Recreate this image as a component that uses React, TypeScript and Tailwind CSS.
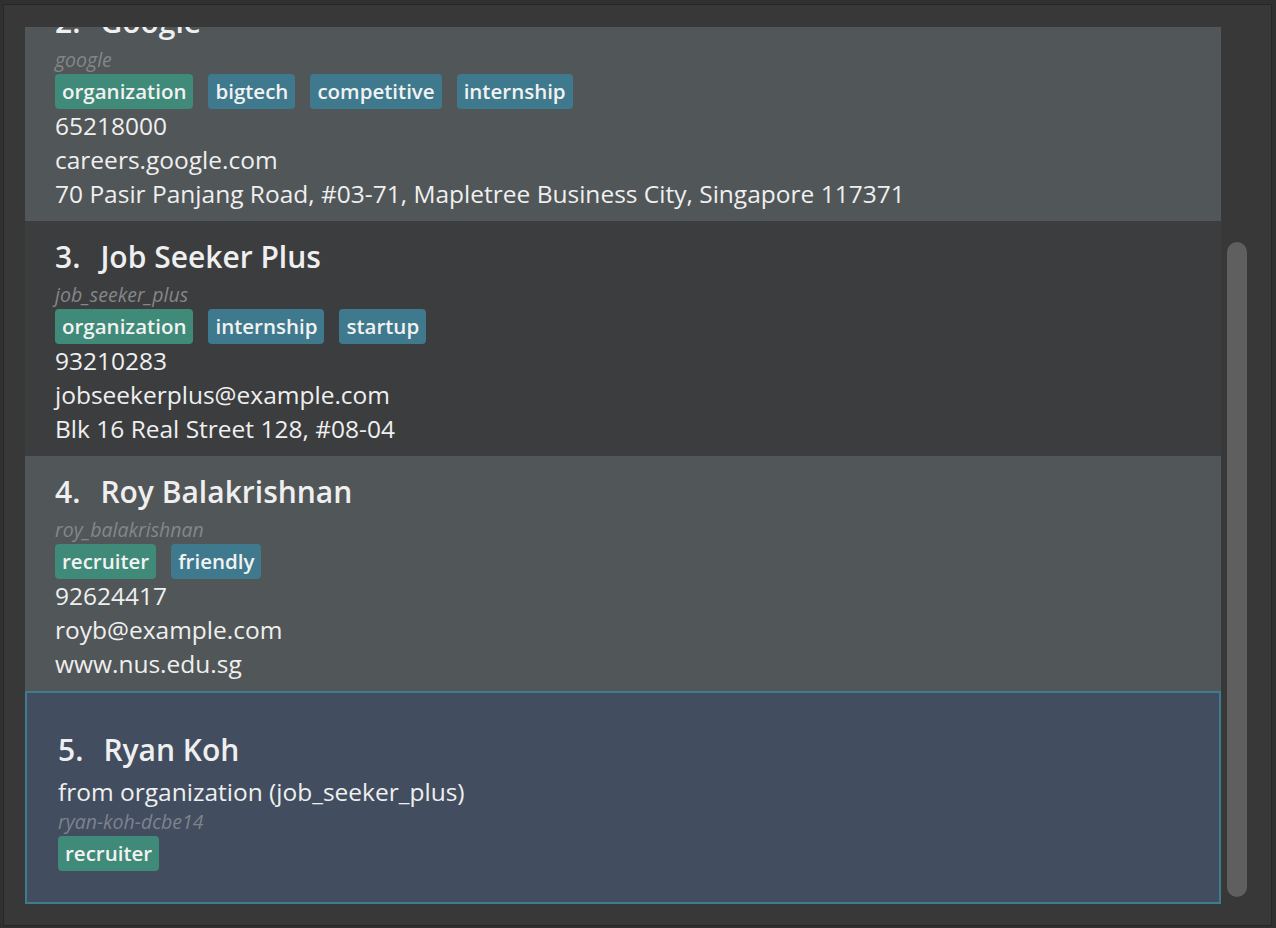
import React from 'react';

type TagKind = 'role' | 'topic';

interface Contact {
  index: number;
  name: string;
  handle: string;
  tags: { label: string; kind: TagKind }[];
  lines: string[];
  from?: string;
  selected?: boolean;
  shade: 'light' | 'dark';
}

const contacts: Contact[] = [
  {
    index: 2,
    name: 'Google',
    handle: 'google',
    tags: [
      { label: 'organization', kind: 'role' },
      { label: 'bigtech', kind: 'topic' },
      { label: 'competitive', kind: 'topic' },
      { label: 'internship', kind: 'topic' }
    ],
    lines: ['65218000', 'careers.google.com', '70 Pasir Panjang Road, #03-71, Mapletree Business City, Singapore 117371'],
    shade: 'light'
  },
  {
    index: 3,
    name: 'Job Seeker Plus',
    handle: 'job_seeker_plus',
    tags: [
      { label: 'organization', kind: 'role' },
      { label: 'internship', kind: 'topic' },
      { label: 'startup', kind: 'topic' }
    ],
    lines: ['93210283', 'jobseekerplus@example.com', 'Blk 16 Real Street 128, #08-04'],
    shade: 'dark'
  },
  {
    index: 4,
    name: 'Roy Balakrishnan',
    handle: 'roy_balakrishnan',
    tags: [
      { label: 'recruiter', kind: 'role' },
      { label: 'friendly', kind: 'topic' }
    ],
    lines: ['92624417', 'royb@example.com', 'www.nus.edu.sg'],
    shade: 'light'
  },
  {
    index: 5,
    name: 'Ryan Koh',
    handle: 'ryan-koh-dcbe14',
    from: 'from organization (job_seeker_plus)',
    tags: [{ label: 'recruiter', kind: 'role' }],
    lines: [],
    shade: 'dark',
    selected: true
  }
];

function TagChip({ label, kind }: { label: string; kind: TagKind }) {
  return (
    <span
      className={
        kind === 'role'
          ? 'h-[35px] px-[7px] rounded-[4px] text-[20.5px] leading-[35px] font-semibold text-[#f2f2f2] bg-[#3f8a78]'
          : 'h-[35px] px-[7px] rounded-[4px] text-[20.5px] leading-[35px] font-semibold text-[#f2f2f2] bg-[#3e798d]'
      }
    >
      {label}
    </span>
  );
}

function ContactCard({ contact }: { contact: Contact }) {
  if (contact.selected) {
    return (
      <div className="h-[213px] shrink-0 border-2 border-[#3e7b91] bg-[#424d5f] pl-[31px] pt-[37px]">
        <div className="flex h-[40px] items-center text-[30px] leading-[40px] font-semibold text-[#efefef]">
          <span>{contact.index}.</span>
          <span className="ml-[20px]">{contact.name}</span>
        </div>
        <div className="mt-[5px] text-[24.5px] leading-[34px] text-[#efefef]">{contact.from}</div>
        <div className="text-[19.5px] leading-[26px] italic text-[#7d838c]">{contact.handle}</div>
        <div className="mt-[1px] flex gap-[15px]">
          {contact.tags.map((t) => (
            <TagChip key={t.label} label={t.label} kind={t.kind} />
          ))}
        </div>
      </div>
    );
  }

  return (
    <div
      className={
        contact.shade === 'light'
          ? 'h-[235px] shrink-0 bg-[#515658] pl-[30px] pt-[16px]'
          : 'h-[235px] shrink-0 bg-[#3c3d3f] pl-[30px] pt-[16px]'
      }
    >
      <div className="flex h-[40px] items-center text-[30px] leading-[40px] font-semibold text-[#efefef]">
        <span>{contact.index}.</span>
        <span className="ml-[20px]">{contact.name}</span>
      </div>
      <div className="mt-[5px] text-[19.5px] leading-[26px] italic text-[#858789]">{contact.handle}</div>
      <div className="mt-[1px] flex gap-[15px]">
        {contact.tags.map((t) => (
          <TagChip key={t.label} label={t.label} kind={t.kind} />
        ))}
      </div>
      {contact.lines.map((line) => (
        <div key={line} className="text-[24.5px] leading-[34px] text-[#efefef]">
          {line}
        </div>
      ))}
    </div>
  );
}

export default function App() {
  return (
    <div className="w-[1276px] h-[928px] bg-[#303030] pt-[4px] pl-[3px] pr-[4px] pb-[2px] font-['Open_Sans','Noto_Sans',sans-serif]">
      <div className="flex h-full border border-[#272727] bg-[#383838] pl-[21px] pt-[22px] pb-[21px]">
        {/* list viewport, scrolled to the bottom */}
        <div className="w-[1196px] h-full overflow-hidden">
          <div className="-mt-[41px] flex flex-col">
            {contacts.map((c) => (
              <ContactCard key={c.index} contact={c} />
            ))}
          </div>
        </div>

        {/* vertical scrollbar */}
        <div className="ml-[6px] w-[20px] flex flex-col">
          <div className="mt-[215px] h-[655px] rounded-[10px] bg-[#5f5f5f]" />
        </div>
      </div>
    </div>
  );
}
